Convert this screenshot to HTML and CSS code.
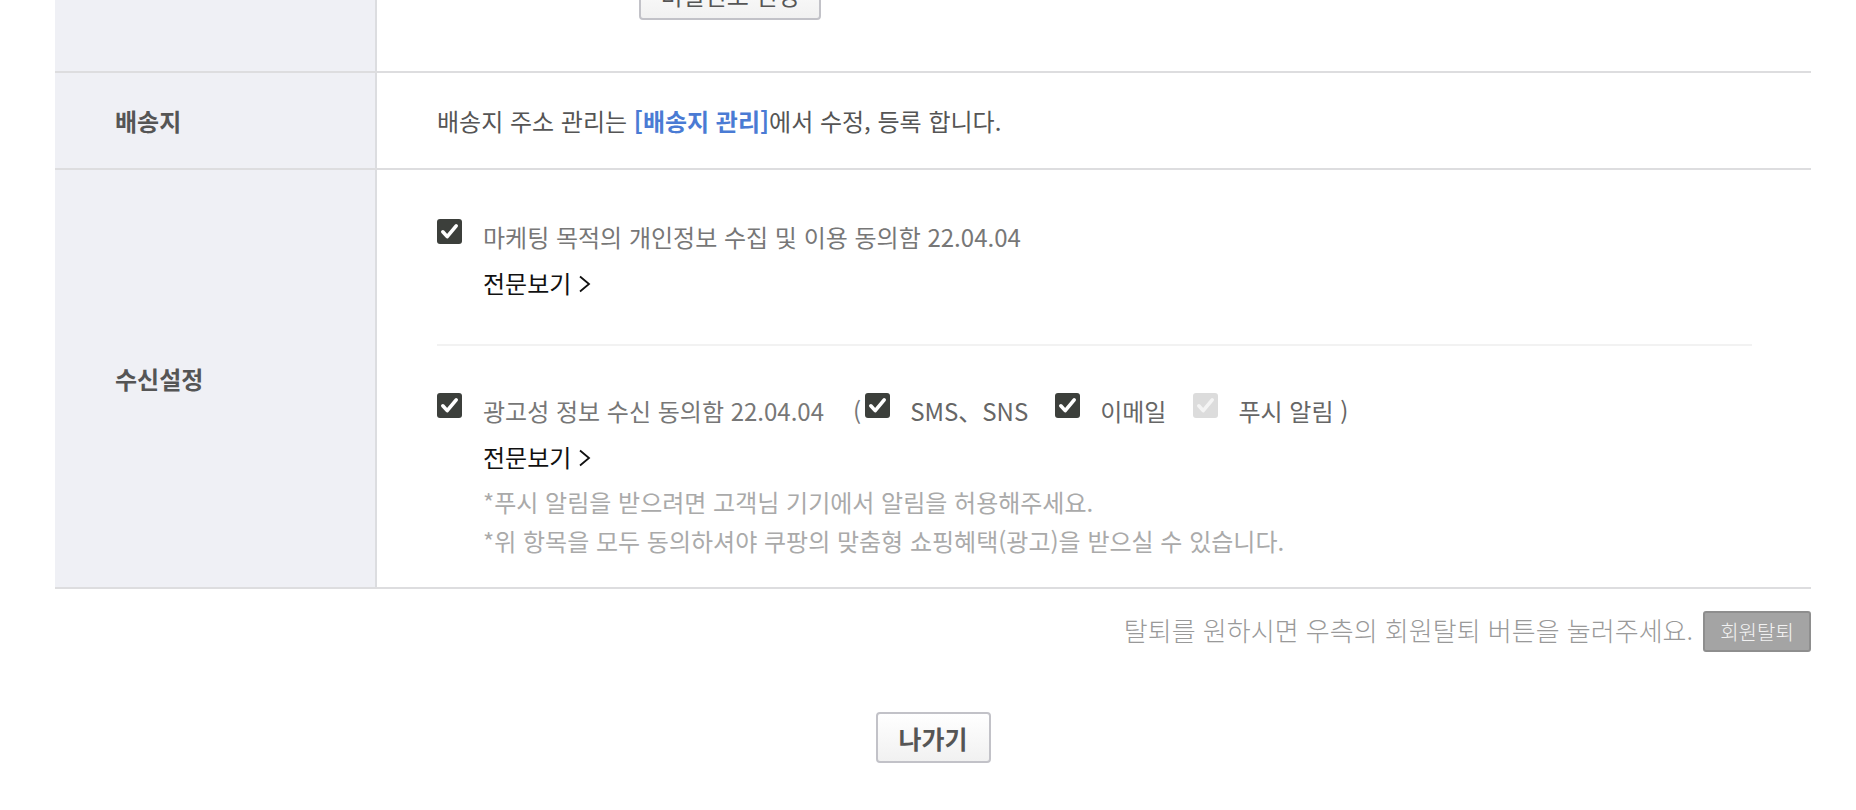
FILE: index.html
```html
<!DOCTYPE html>
<html lang="ko">
<head>
<meta charset="utf-8">
<title>회원정보 수정</title>
<link rel="stylesheet" href="styles.css">
</head>
<body>
<div class="page">
  <div class="info-table">
    <div class="row row-top">
      <div class="th"></div>
      <div class="td td-top">
        <button class="btn-soft btn-pw">비밀번호 변경</button>
      </div>
    </div>
    <div class="row row-addr">
      <div class="th">배송지</div>
      <div class="td td-addr">배송지 주소 관리는 <a class="link-blue">[배송지 관리]</a>에서 수정, 등록 합니다.</div>
    </div>
    <div class="row row-recv">
      <div class="th">수신설정</div>
      <div class="td td-recv">
        <div class="agree">
          <div class="agree-line">
            <span class="cb cb-on"><svg viewBox="0 0 25 25" width="25" height="25"><path d="M5.8 12.8 L10.2 17.6 L19.2 6.8" fill="none" stroke="#fff" stroke-width="3.6" stroke-linecap="round" stroke-linejoin="round"/></svg></span>
            <span class="agree-text">마케팅 목적의 개인정보 수집 및 이용 동의함 22.04.04</span>
          </div>
          <a class="more">전문보기<svg class="chev" viewBox="0 0 13 18" width="13" height="18"><path d="M2 1.5 L11 9 L2 16.5" fill="none" stroke="#111" stroke-width="1.8"/></svg></a>
        </div>
        <div class="sep"></div>
        <div class="agree agree-2">
          <div class="agree-line">
            <span class="cb cb-on"><svg viewBox="0 0 25 25" width="25" height="25"><path d="M5.8 12.8 L10.2 17.6 L19.2 6.8" fill="none" stroke="#fff" stroke-width="3.6" stroke-linecap="round" stroke-linejoin="round"/></svg></span>
            <span class="agree-text">광고성 정보 수신 동의함 22.04.04</span>
            <span class="paren paren-open">(</span>
            <span class="cb cb-on"><svg viewBox="0 0 25 25" width="25" height="25"><path d="M5.8 12.8 L10.2 17.6 L19.2 6.8" fill="none" stroke="#fff" stroke-width="3.6" stroke-linecap="round" stroke-linejoin="round"/></svg></span>
            <span class="opt-text">SMS、SNS</span>
            <span class="cb cb-on cb-gap"><svg viewBox="0 0 25 25" width="25" height="25"><path d="M5.8 12.8 L10.2 17.6 L19.2 6.8" fill="none" stroke="#fff" stroke-width="3.6" stroke-linecap="round" stroke-linejoin="round"/></svg></span>
            <span class="opt-text">이메일</span>
            <span class="cb cb-off cb-gap"><svg viewBox="0 0 25 25" width="25" height="25"><path d="M5.8 12.8 L10.2 17.6 L19.2 6.8" fill="none" stroke="#f4f4f4" stroke-width="3.6" stroke-linecap="round" stroke-linejoin="round"/></svg></span>
            <span class="opt-text">푸시 알림 )</span>
          </div>
          <a class="more">전문보기<svg class="chev" viewBox="0 0 13 18" width="13" height="18"><path d="M2 1.5 L11 9 L2 16.5" fill="none" stroke="#111" stroke-width="1.8"/></svg></a>
          <p class="note note-1">*푸시 알림을 받으려면 고객님 기기에서 알림을 허용해주세요.</p>
          <p class="note">*위 항목을 모두 동의하셔야 쿠팡의 맞춤형 쇼핑혜택(광고)을 받으실 수 있습니다.</p>
        </div>
      </div>
    </div>
  </div>
  <div class="withdraw">
    <span class="withdraw-text">탈퇴를 원하시면 우측의 회원탈퇴 버튼을 눌러주세요.</span>
    <button class="btn-withdraw">회원탈퇴</button>
  </div>
  <div class="exit-wrap">
    <button class="btn-soft btn-exit">나가기</button>
  </div>
</div>
</body>
</html>
```

FILE: styles.css
```css
* { box-sizing: border-box; }
html, body { margin: 0; padding: 0; background: #fff; }
body {
  font-family: "Noto Sans CJK KR", "Noto Sans", sans-serif;
  font-size: 24px;
  color: #555;
}
.page {
  width: 1756px;
  margin-left: 55px;
}
.info-table { display: flex; flex-direction: column; }
.row {
  display: flex;
  border-bottom: 2px solid #dddddf;
}
.th {
  width: 322px;
  flex: none;
  background: #eff0f5;
  border-right: 2px solid #dcdde0;
  padding-left: 60px;
  font-weight: 700;
  color: #555;
  display: flex;
  align-items: center;
}
.td {
  flex: 1;
  padding: 0 59px 0 60px;
}
.row-top { height: 73px; overflow: hidden; }
.td-top {
  display: flex;
  align-items: flex-start;
  padding-left: 262px;
}
.btn-soft {
  font-family: inherit;
  font-size: 24px;
  color: #555;
  background: linear-gradient(#ffffff, #f1f1f1);
  border: 2px solid #c2c2c8;
  border-radius: 4px;
  cursor: pointer;
}
.btn-pw {
  margin-top: -31px;
  width: 182px;
  height: 51px;
  padding: 0;
  line-height: 1;
}
.row-addr { height: 97px; }
.td-addr {
  display: flex;
  align-items: center;
  white-space: pre;
  color: #555;
}
.link-blue { color: #4a7bd4; font-weight: 700; }
.row-recv { height: 419px; }
.td-recv { padding-top: 49px; }
.agree-line {
  display: flex;
  align-items: flex-start;
  height: 36px;
  white-space: nowrap;
}
.cb {
  width: 25px;
  height: 25px;
  flex: none;
  border-radius: 3px;
  display: block;
}
.cb svg { display: block; }
.cb-on { background: #3c3f3b; }
.cb-off { background: #dcdcdc; }
.agree-text {
  margin-left: 21px;
  line-height: 36px;
  color: #777;
}
.paren { line-height: 36px; color: #777; }
.paren-open { margin-left: 29px; margin-right: 4px; }
.opt-text {
  margin-left: 20px;
  line-height: 36px;
  color: #666;
}
.cb-gap { margin-left: 27px; }
.more {
  display: flex;
  align-items: center;
  margin-top: 9px;
  margin-left: 46px;
  height: 36px;
  color: #111;
  white-space: pre;
}
.chev { margin-left: 7px; margin-top: 3px; }
.sep {
  height: 2px;
  background: #f2f2f2;
  margin-top: 44px;
}
.agree-2 { margin-top: 47px; }
.note {
  margin: 0 0 0 46px;
  line-height: 39px;
  color: #aaa;
}
.note-1 { margin-top: 8px; }
.withdraw {
  display: flex;
  justify-content: flex-end;
  align-items: center;
  margin-top: 22px;
}
.withdraw-text {
  font-size: 26px;
  font-weight: 300;
  color: #999;
  margin-right: 10px;
  margin-top: -5px;
}
.btn-withdraw {
  font-family: inherit;
  font-size: 20px;
  font-weight: 300;
  color: #f2f2f2;
  background: #a4a4a4;
  border: 2px solid #8e8e8e;
  border-radius: 3px;
  width: 108px;
  height: 41px;
  padding: 0;
}
.exit-wrap {
  display: flex;
  justify-content: center;
  margin-top: 60px;
}
.btn-exit {
  width: 115px;
  height: 51px;
  font-size: 25px;
  font-weight: 700;
  padding: 0;
}
```
